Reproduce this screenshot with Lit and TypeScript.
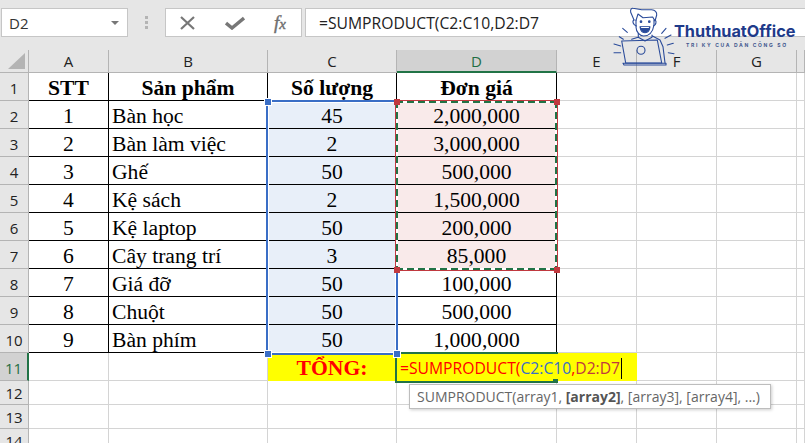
import { LitElement, css, html, svg } from "lit";
import { customElement } from "lit/decorators.js";
import { styleMap } from "lit/directives/style-map.js";

const COLS = ["A", "B", "C", "D", "E", "F", "G", ""];

const PRODUCTS: [string, string, string, string][] = [
  ["STT", "Sản phẩm", "Số lượng", "Đơn giá"],
  ["1", "Bàn học", "45", "2,000,000"],
  ["2", "Bàn làm việc", "2", "3,000,000"],
  ["3", "Ghế", "50", "500,000"],
  ["4", "Kệ sách", "2", "1,500,000"],
  ["5", "Kệ laptop", "50", "200,000"],
  ["6", "Cây trang trí", "3", "85,000"],
  ["7", "Giá đỡ", "50", "100,000"],
  ["8", "Chuột", "50", "500,000"],
  ["9", "Bàn phím", "50", "1,000,000"],
];

// selection handles: centre of each one, in sheet pixels
const KNOBS: [string, number, number][] = [
  ["b", 268, 52],
  ["b", 268, 304],
  ["b", 397, 304],
  ["r", 397, 52],
  ["r", 557, 52],
  ["r", 397, 220],
  ["r", 557, 220],
  ["g", 556, 332],
];

@customElement("app-root")
export class AppRoot extends LitElement {
  static styles = css`
    :host {
      display: block;
      position: relative;
      width: 805px;
      height: 443px;
      overflow: hidden;
      background: #fff;
      font-family: "Open Sans", sans-serif;
    }
    .bar {
      box-sizing: border-box;
      height: 50px;
      padding: 8px 0 13px 1px;
      display: flex;
      background: #e6e6e6;
    }
    .box {
      box-sizing: border-box;
      height: 29px;
      background: #fff;
      border: 1px solid #c6c6c6;
      display: flex;
      align-items: center;
    }
    .name {
      width: 127px;
      padding: 0 8px 0 7px;
      justify-content: space-between;
      font-size: 15px;
      color: #333;
    }
    .caret {
      border: 4px solid transparent;
      border-top: 4px solid #777;
      border-bottom: 0;
    }
    .grip {
      width: 37px;
      display: flex;
      flex-direction: column;
      align-items: center;
      justify-content: center;
      gap: 2px;
    }
    .grip i {
      width: 3px;
      height: 3px;
      background: #b4b4b4;
    }
    .buttons {
      width: 137px;
      padding: 0 15px 0 14px;
      justify-content: space-between;
      margin-right: 3px;
    }
    .fx {
      font: italic 19px "Liberation Serif", serif;
      color: #6f6f6f;
      -webkit-text-stroke: 0.4px #6f6f6f;
    }
    .fx small {
      font-size: 15px;
    }
    .formula {
      flex: 1;
      padding-left: 13px;
      font-size: 15.7px;
      color: #222;
      border-right: 0;
    }
    .sheet {
      position: relative;
      display: grid;
      grid-template-columns: 29px 80px 159px 129px 160px 80px 80px 80px 1fr;
      grid-template-rows: 23px repeat(10, 28px) 28px 24px 24px 24px;
    }
    .head {
      box-sizing: border-box;
      display: flex;
      align-items: center;
      justify-content: center;
      background: #e6e6e6;
      color: #222;
      font-size: 15px;
      border-right: 1px solid #b4b4b4;
      border-bottom: 1px solid #b4b4b4;
    }
    .head.tall {
      padding-top: 3px;
    }
    .head.on {
      background: #d2d2d2;
      color: #1f6e43;
    }
    .col.on {
      border-bottom: 2px solid #217346;
    }
    .row.on {
      border-right: 2px solid #217346;
    }
    .corner {
      width: 0;
      height: 0;
      border-left: 17px solid transparent;
      border-bottom: 16px solid #b4b4b4;
    }
    .head.first {
      align-items: flex-end;
      justify-content: flex-end;
      padding: 0 3px 3px 0;
    }
    .cell {
      box-sizing: border-box;
      display: flex;
      align-items: center;
      justify-content: center;
      padding-top: 3px;
      border-right: 1px solid #d4d4d4;
      border-bottom: 1px solid #d4d4d4;
      font: 21.6px "Liberation Serif", serif;
      color: #000;
      white-space: nowrap;
    }
    .cell.ruled {
      border-color: #000;
    }
    .cell.left {
      justify-content: flex-start;
      padding-left: 3px;
    }
    .cell.bold {
      font-weight: 700;
    }
    .cell.qty {
      background: #e8eff9;
    }
    .cell.price {
      background: #f9eaea;
    }
    .cell.total {
      background: #ff0;
      color: #f00;
      font-weight: 700;
      border-color: #ff0;
    }
    .cell.over {
      background: #ff0;
      border-color: #ff0;
    }
    .range {
      position: absolute;
      box-sizing: border-box;
      pointer-events: none;
    }
    .range.blue {
      left: 266px;
      top: 50px;
      width: 132px;
      height: 255px;
      border: 2px solid #3a6ec6;
      box-shadow: inset 0 0 0 1px #fff;
    }
    .range.red {
      left: 395px;
      top: 50px;
      width: 163px;
      height: 171px;
      border: 1px solid #c0393f;
    }
    .range.dash {
      left: 396px;
      top: 51px;
      width: 161px;
      height: 169px;
      background:
        repeating-linear-gradient(90deg, #217346 0 7px, #fff 7px 11px) top / 100% 2px no-repeat,
        repeating-linear-gradient(90deg, #217346 0 7px, #fff 7px 11px) bottom / 100% 2px no-repeat,
        repeating-linear-gradient(180deg, #217346 0 7px, #fff 7px 11px) left / 2px 100% no-repeat,
        repeating-linear-gradient(180deg, #217346 0 7px, #fff 7px 11px) right / 2px 100% no-repeat;
    }
    .range.edit {
      left: 395px;
      top: 302px;
      width: 163px;
      height: 31px;
      border: 2px solid #217346;
      border-right: 0;
    }
    .knob {
      position: absolute;
      width: 6px;
      height: 6px;
      margin: -3px 0 0 -3px;
    }
    .knob.b {
      background: #3a6ec6;
      outline: 1px solid #fff;
    }
    .knob.r {
      background: #c0393f;
    }
    .knob.g {
      width: 5px;
      height: 4px;
      background: #217346;
    }
    .entry {
      position: absolute;
      left: 400px;
      top: 304px;
      height: 28px;
      display: flex;
      align-items: center;
      font-size: 15.7px;
      color: #f00;
      white-space: nowrap;
    }
    .entry .c {
      color: #3a6ec6;
    }
    .entry .d {
      color: #c0393f;
    }
    .entry .cursor {
      width: 1px;
      height: 21px;
      margin-left: 1px;
      background: #000;
    }
    .tip {
      position: absolute;
      left: 409px;
      top: 384px;
      box-sizing: border-box;
      width: 362px;
      height: 25px;
      padding-left: 7px;
      display: flex;
      align-items: center;
      background: #fff;
      border: 1px solid #bdbdbd;
      box-shadow: 1px 1px 3px rgba(0, 0, 0, 0.2);
      font-size: 14px;
      color: #666;
      white-space: pre;
    }
    .tip b {
      color: #555;
    }
    .logo {
      position: absolute;
      left: 610px;
      top: 5px;
      color: #2a4b9a;
    }
    .brand {
      position: absolute;
      left: 674px;
      top: 21px;
      font: 700 16.3px Inter, sans-serif;
      line-height: 20px;
      color: #1e3a8a;
      white-space: nowrap;
    }
    .slogan {
      position: absolute;
      left: 686px;
      top: 42px;
      font: 700 5px Inter, sans-serif;
      line-height: 6px;
      letter-spacing: 1.65px;
      color: #44598f;
      white-space: nowrap;
    }
  `;

  private logo() {
    return html`<svg class="logo" width="75" height="65" viewBox="610 5 75 65" fill="none" stroke="currentColor" stroke-width="1.1" stroke-linecap="round" stroke-linejoin="round">
      ${svg`
        <path d="M634 20 630.700 12.300C630 9 632 8 633 8.300L641.700 9.700 651.700 9.700C655 10 657 12 656.700 15L655 21 652.700 17 643 17.700 638 14 636 20.300" />
        <path d="M636 20v7c0 5 4 9 7.500 9s9-2 10.500-11v-5" />
        <path d="M634 20c-2 1-1 5 2.500 6M655 20c2 1 1 5-1.500 6" />
        <path d="M640 26.700h10c-1 8-9 8-10 0z" fill="currentColor" />
        <path d="M641.500 27.500h7" stroke="#fff" stroke-width="1" />
        <circle cx="641" cy="21.700" r=".8" fill="currentColor" />
        <circle cx="649.300" cy="21.700" r=".8" fill="currentColor" />
        <path d="M638.300 33.300v4L645 41l7-3.700V35M638 37.300 631.700 39.300M652 35.700 660 40 663 46.700 665 63" />
        <path d="M621.700 41 657.300 40 661.700 63H625.700z" />
        <path d="M623 63.300H666V65H624z" />
        <circle cx="641" cy="50.300" r="4" />
        <path d="M622.700 28.300l4.600 4M619.300 36.700l4 2.600M614 44l6.700 2M614 52.700h6.700M661.700 33.300l4.300-5M665 38.300l6-3.300M667.300 45l6-1.700M668.300 52.700l5.700 1" />
      `}
    </svg>`;
  }

  private topBar() {
    return html`<div class="bar">
      <div class="box name"><span>D2</span><span class="caret"></span></div>
      <div class="grip"><i></i><i></i><i></i></div>
      <div class="box buttons">
        <svg width="15" height="14" viewBox="0 0 15 14" stroke="#777" stroke-width="2.200" fill="none"><path d="M1 1 14 13M14 1 1 13" /></svg>
        <svg width="20" height="14" viewBox="0 0 20 14" stroke="#777" stroke-width="3.400" fill="none"><path d="M1 7 7 12 19 2" /></svg>
        <span class="fx">f<small>x</small></span>
      </div>
      <div class="box formula">=SUMPRODUCT(C2:C10,D2:D7</div>
    </div>`;
  }

  private cellClass(r: number, c: number) {
    const names = ["cell", "ruled"];
    if (r === 0) names.push("bold");
    if (c === 1 && r > 0) names.push("left");
    if (c === 2 && r > 0) names.push("qty");
    if (c === 3 && r > 0 && r < 7) names.push("price");
    return names.join(" ");
  }

  private sheet() {
    return html`<div class="sheet">
      <div class="head first"><span class="corner"></span></div>
      ${COLS.map((c) => html`<div class="head col ${c === "D" ? "on" : ""}">${c}</div>`)}
      ${PRODUCTS.map(
        (row, r) => html`
          <div class="head row tall">${r + 1}</div>
          ${row.map((text, c) => html`<div class=${this.cellClass(r, c)}>${text}</div>`)}
          ${[0, 1, 2, 3].map(() => html`<div class="cell"></div>`)}
        `,
      )}
      <div class="head row tall on">11</div>
      <div class="cell"></div>
      <div class="cell"></div>
      <div class="cell total">TỔNG:</div>
      <div class="cell over"></div>
      <div class="cell over"></div>
      <div class="cell"></div>
      <div class="cell"></div>
      <div class="cell"></div>
      ${[12, 13, 14].map(
        (n) => html`
          <div class="head row">${n}</div>
          ${COLS.map(() => html`<div class="cell"></div>`)}
        `,
      )}
      <div class="range blue"></div>
      <div class="range red"></div>
      <div class="range dash"></div>
      <div class="range edit"></div>
      ${KNOBS.map(
        ([kind, x, y]) =>
          html`<span class="knob ${kind}" style=${styleMap({ left: `${x}px`, top: `${y}px` })}></span>`,
      )}
      <div class="entry">
        <span>=SUMPRODUCT(</span><span class="c">C2:C10</span><span>,</span><span class="d">D2:D7</span><span class="cursor"></span>
      </div>
    </div>`;
  }

  render() {
    return html`
      ${this.topBar()} ${this.sheet()}
      <div class="tip"><span>SUMPRODUCT(array1, <b>[array2]</b>, [array3], [array4], ...)</span></div>
      ${this.logo()}
      <div class="brand">ThuthuatOffice</div>
      <div class="slogan">TRI KỶ CỦA DÂN CÔNG SỞ</div>
    `;
  }
}
